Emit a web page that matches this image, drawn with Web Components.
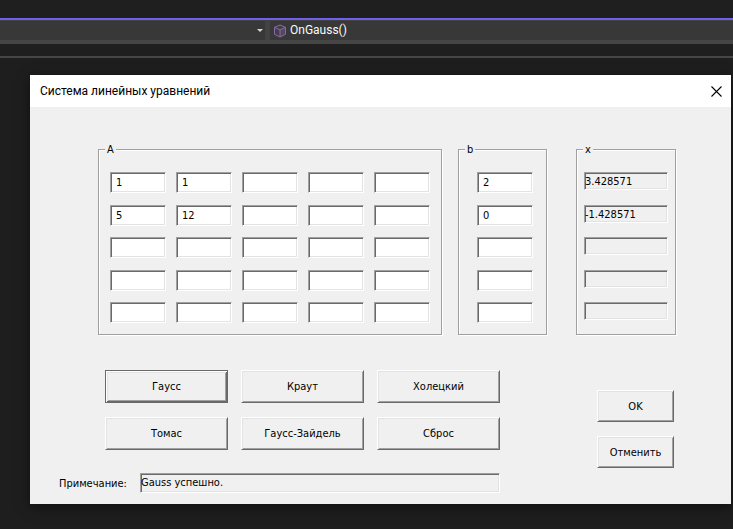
<!DOCTYPE html>
<html lang="ru">
<head>
<meta charset="utf-8">
<title>Система линейных уравнений</title>
<style>
html,body{margin:0;min-height:100%;background:#1e1e1e}
body{font:11px/13px "DejaVu Sans Condensed","Liberation Sans",sans-serif;color:#000;
--face:#f0f0f0;--light:#e3e3e3;--shadow:#a0a0a0;--dark:#696969}
</style>
</head>
<body>
<ide-navbar></ide-navbar>
<app-dialog heading="Система линейных уравнений">
  <equation-form></equation-form>
</app-dialog>
<script>
function define(name, html, setup) {
  const template = document.createElement('template');
  template.innerHTML = html;
  customElements.define(name, class extends HTMLElement {
    constructor() {
      super();
      this.attachShadow({mode: 'open'}).append(template.content.cloneNode(true));
    }
    connectedCallback() {
      if (setup) setup(this, this.shadowRoot);
    }
  });
}

define('ide-navbar', `
<style>
:host{display:block;border-bottom:2px solid #464646;padding:18px 0 12px;background:#1f1f1f}
.bar{display:grid;grid-template-columns:265px 1fr;gap:5px;height:19px;background:#424242;border-top:2px solid #7160e8;border-bottom:4px solid #464646;padding-top:1px}
.box{display:flex;align-items:center;background:#383838;min-width:0}
select{appearance:none;border:0;background:none;flex:1;min-width:0;height:19px;padding:0;margin:0;color:#fafafa;font:12px/19px Roboto,sans-serif}
.arrow{width:6px;height:3px;margin-right:2px}
.cube{width:14px;height:14px;margin:0 3px}
</style>
<div class="bar">
  <div class="box"><select aria-label="Область"><option></option></select>
    <svg class="arrow" viewBox="0 0 6 3"><path d="M0 0h6L3 3z" fill="#d6d6d6"/></svg></div>
  <div class="box"><svg class="cube" viewBox="0 0 14 14" fill="none" stroke="#8b69a8" stroke-linejoin="round"><path d="M7 1l5.500 2.300v7L7 13l-5.500-2.700v-7z" fill="#8b69a8" fill-opacity=".12"/><path d="M7 6v7l5.500-2.700v-7z" fill="#8b69a8" fill-opacity=".25" stroke="none"/><path d="M1.500 3.300L7 6l5.500-2.700M7 6v7"/></svg>
    <select aria-label="Функция"><option>OnGauss()</option></select></div>
</div>`);

define('app-dialog', `
<style>
:host{display:block;margin:17px 2px 25px 30px;background:var(--face);box-shadow:0 3px 12px #00000080}
header{display:flex;align-items:center;justify-content:space-between;height:32px;padding:0 9px 0 10px;background:#fff}
h1{margin:0;font:12px/16px Roboto,sans-serif}
button{border:0;background:none;padding:0;width:11px;height:11px;display:flex}
</style>
<header><h1></h1><button type="button" aria-label="Закрыть"><svg width="11" height="11" viewBox="0 0 11 11"><path d="M.5.5l10 10M10.500.5l-10 10" stroke="#000" stroke-width="1.100"/></svg></button></header>
<slot></slot>`, (host, root) => {
  root.querySelector('h1').textContent = host.getAttribute('heading');
});

define('group-box', `
<style>
:host{display:block;min-width:0}
fieldset{margin:0;min-width:0;border:1px solid var(--shadow);box-shadow:1px 1px #fff,inset 1px 1px #fff;padding:16px var(--pad-right) 11px var(--pad-left)}
legend{margin:0 0 0 calc(6px - var(--pad-left));padding:0 2px;height:13px;background:var(--face)}
.cells{display:grid;grid-template-columns:repeat(var(--columns,1),minmax(0,1fr));grid-template-rows:33px 32px 33px 32px 21px;column-gap:10px;align-items:start}
</style>
<fieldset><legend></legend><div class="cells"><slot></slot></div></fieldset>`, (host, root) => {
  root.querySelector('legend').textContent = host.getAttribute('label');
});

define('edit-cell', `
<style>
:host{display:block;min-width:0}
input{display:block;box-sizing:border-box;width:100%;height:21px;margin:0;padding:0 4px 0 5px;border:1px solid;border-color:var(--shadow) #fff #fff var(--shadow);border-radius:0;background:#fff;color:#000;font:inherit;box-shadow:inset 1px 1px var(--dark),inset -1px -1px var(--light);outline:0}
</style>
<input type="text">`, (host, root) => {
  const input = root.querySelector('input');
  input.value = host.getAttribute('value') || '';
  input.setAttribute('aria-label', host.getAttribute('label'));
});

define('static-cell', `
<style>
:host{display:block;min-width:0}
output{display:block;box-sizing:border-box;height:var(--cell-height,18px);padding:2px 0 0;border:1px solid;border-color:var(--shadow) #fff #fff var(--shadow);box-shadow:inset 1px 1px var(--dark),inset -1px -1px var(--light);white-space:nowrap;overflow:hidden}
</style>
<output></output>`, (host, root) => {
  const output = root.querySelector('output');
  output.textContent = host.getAttribute('value') || '';
  output.setAttribute('aria-label', host.getAttribute('label'));
});

define('push-button', `
<style>
:host{display:block}
button{display:block;width:100%;height:var(--button-height,33px);padding:0;border:1px solid;border-color:#fff var(--dark) var(--dark) #fff;border-radius:0;background:var(--face);color:#000;font:inherit;box-shadow:inset 1px 1px var(--light),inset -1px -1px var(--shadow)}
:host([default]) button{border-color:var(--dark);box-shadow:inset 1px 1px #fff,inset -1px -1px var(--dark),inset 2px 2px var(--light),inset -2px -2px var(--shadow)}
</style>
<button type="button"><slot></slot></button>`);

define('equation-form', `
<style>
:host{display:block;padding:36px 0 11px}
.groups{display:grid;grid-template-columns:minmax(0,360fr) minmax(0,118fr) minmax(0,100fr);padding:0 55px 0 68px}
.a{--columns:5;--pad-left:11px;--pad-right:11px;margin-right:16px}
.b{--pad-left:18px;--pad-right:13px;margin-right:29px}
.x{--pad-left:7px;--pad-right:7px}
.lower{display:flex;justify-content:space-between;padding:35px 57px 0 29px}
.methods{display:grid;grid-template-columns:repeat(3,123px);gap:14px 13px;padding-left:46px}
.note{display:grid;grid-template-columns:81px 1fr;align-items:center;margin-top:23px;--cell-height:20px}
.answer{display:grid;align-content:start;gap:14px;width:77px;padding-top:20px;--button-height:32px}
</style>
<div class="groups">
  <group-box class="a" label="A"></group-box>
  <group-box class="b" label="b"></group-box>
  <group-box class="x" label="x"></group-box>
</div>
<div class="lower">
  <div>
    <div class="methods">
      <push-button default>Гаусс</push-button><push-button>Краут</push-button><push-button>Холецкий</push-button>
      <push-button>Томас</push-button><push-button>Гаусс-Зайдель</push-button><push-button>Сброс</push-button>
    </div>
    <div class="note"><span>Примечание:</span><static-cell label="Примечание" value="Gauss успешно."></static-cell></div>
  </div>
  <div class="answer"><push-button>OK</push-button><push-button>Отменить</push-button></div>
</div>`, (host, root) => {
  const fill = (group, tag, label, values) => {
    for (const [i, value] of values.entries()) {
      const cell = document.createElement(tag);
      cell.setAttribute('label', label + (i + 1));
      cell.setAttribute('value', value);
      root.querySelector(group).append(cell);
    }
  };
  const matrix = [['1', '1', '', '', ''], ['5', '12', '', '', ''], ...Array(3).fill(['', '', '', '', ''])];
  matrix.forEach((row, i) => fill('.a', 'edit-cell', 'A' + (i + 1), row));
  fill('.b', 'edit-cell', 'b', ['2', '0', '', '', '']);
  fill('.x', 'static-cell', 'x', ['3.428571', '-1.428571', '', '', '']);
});
</script>
</body>
</html>
